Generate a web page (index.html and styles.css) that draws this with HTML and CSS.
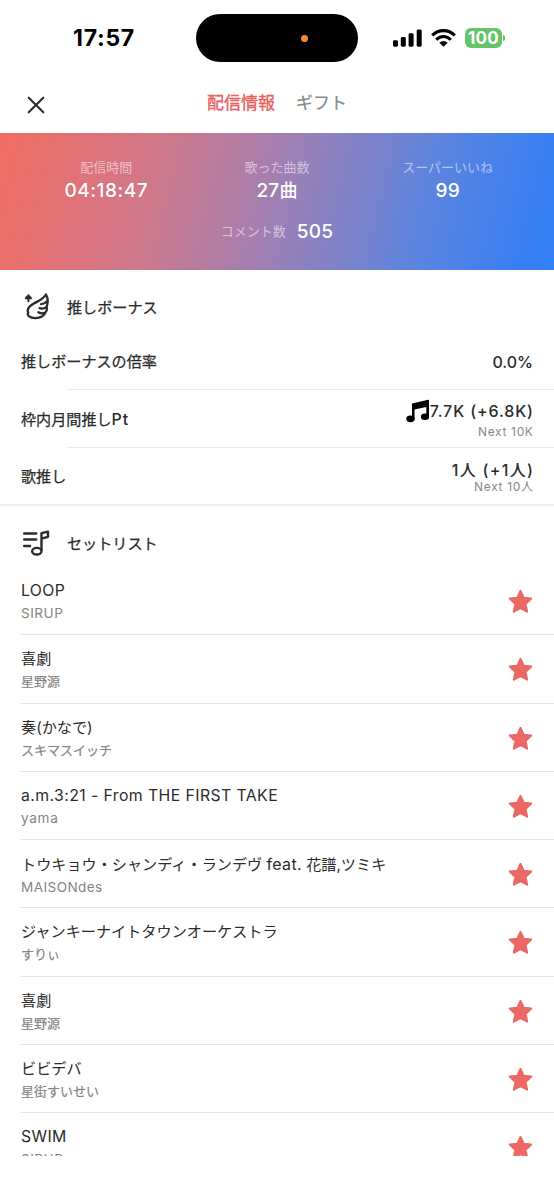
FILE: index.html
```
<!DOCTYPE html>
<html lang="ja">
<head>
<meta charset="utf-8">
<title>配信情報</title>
<link rel="stylesheet" href="styles.css">
</head>
<body>
<svg class="defs" width="0" height="0" aria-hidden="true">
  <symbol id="star" viewBox="0 0 24 24"><path d="M12 1.8 L15 8.4 L22.3 9.1 L16.8 14.3 L18.4 21.8 L12 18.3 L5.6 21.8 L7.2 14.3 L1.7 9.1 L9 8.4 Z" fill="#ec6864" stroke="#ec6864" stroke-width="2" stroke-linejoin="round"/></symbol>
</svg>
<div class="screen">
  <header class="status">
    <div class="clock">17:57</div>
    <div class="island"><i class="dot"></i></div>
    <div class="signals">
      <svg class="cell" width="29" height="18" viewBox="0 0 29 18"><rect x="0" y="11.3" width="5" height="6.4" rx="1.4"/><rect x="7.8" y="8" width="5" height="9.7" rx="1.4"/><rect x="15.6" y="4.3" width="5" height="13.4" rx="1.4"/><rect x="23.7" y="0.4" width="5" height="17.3" rx="1.4"/></svg>
      <svg class="wifi" width="25" height="18" viewBox="0 0 25 18"><g fill="none" stroke="#000" stroke-width="3.1"><path d="M1.2 6.4 Q6 1.6 12.5 1.6 T23.8 6.4"/><path d="M5.2 10.8 Q8.3 7.5 12.5 7.5 T19.8 10.8"/></g><path d="M8.3 13.8 Q12.5 10.4 16.7 13.8 L12.5 17.8 Z"/></svg>
      <div class="battery">100</div><i class="tip"></i>
    </div>
  </header>
  <nav class="tabs">
    <svg class="close" width="18" height="18" viewBox="0 0 18 18"><path d="M1.7 1.7 L16.3 16.3 M16.3 1.7 L1.7 16.3" stroke="#2d2d32" stroke-width="2.1" stroke-linecap="round"/></svg>
    <span class="tab active">配信情報</span><span class="tab">ギフト</span>
  </nav>
  <section class="summary">
    <div class="stats">
      <div class="stat"><span class="label">配信時間</span><b class="value time">04:18:47</b></div>
      <div class="stat"><span class="label">歌った曲数</span><b class="value">27<span class="unit">曲</span></b></div>
      <div class="stat"><span class="label">スーパーいいね</span><b class="value">99</b></div>
    </div>
    <div class="comments"><span class="label">コメント数</span><b class="value">505</b></div>
  </section>
  <section class="bonus">
    <h2 class="heading"><svg width="30" height="30" viewBox="0 0 30 30" fill="none" stroke="#2b2b2b" stroke-width="2.3" stroke-linecap="round" stroke-linejoin="round"><path d="M7.4 8.2 V4.5 M4.8 5.2 L7.4 2.3 L10 5.2 Z" stroke-width="2"/><path d="M25 1.5 C22 6.5 17.5 7.8 12.5 10.7 C7.6 13.5 5.6 16.5 7.3 19.7 C5.5 22.4 9 25.1 14.2 25.1 C19.5 25.1 23.6 22.6 24.4 19.5 C21.8 20.6 19 20.3 17.4 19.2 M24.4 19.5 C25.8 17.8 26.2 15.6 25.6 13.8 C23.5 15.5 20.8 15.9 18.6 15.2 M25.6 13.8 C27 10.2 27 5.2 25 1.5 M25.7 8.5 C24.3 10.2 22.2 11.1 20.1 11.2"/></svg><span>推しボーナス</span></h2>
    <div class="bonus-row rate"><span>推しボーナスの倍率</span><div class="amount"><span>0.0%</span></div></div>
    <div class="bonus-row"><span>枠内月間推し<span class="pt">Pt</span></span><div class="amount"><span class="points"><svg class="note" width="24" height="24" viewBox="0 0 24 24"><path d="M6 4.5 L22.3 0.7 Q23 .6 23 1.5 V18 H20.3 V8.1 L8.5 10.4 V20 H6 Z"/><ellipse cx="4.5" cy="19.8" rx="4.2" ry="3.4"/><ellipse cx="19" cy="17.8" rx="4.1" ry="3.3"/></svg>7.7K (+6.8K)</span><small>Next 10K</small></div></div>
    <div class="bonus-row"><span>歌推し</span><div class="amount people"><span>1人 (+1人)</span><small>Next 10人</small></div></div>
  </section>
  <section class="setlist">
    <h2 class="heading"><svg width="30" height="30" viewBox="0 0 30 30" fill="none" stroke="#2b2b2b" stroke-width="2.4" stroke-linecap="round" stroke-linejoin="round"><path d="M3.2 4.5 H15.2 M3.2 10.5 H15.2 M3.2 17 H9"/><path d="M20.5 21 V4.2 L27 2.6 V7.8 L20.5 9.7"/><ellipse cx="15.8" cy="22.2" rx="4.7" ry="3.3"/></svg><span>セットリスト</span></h2>
    <ul>
      <li><div><p class="latin">LOOP</p><small class="latin-sub">SIRUP</small></div><svg class="star"><use href="#star"/></svg></li>
      <li><div><p>喜劇</p><small>星野源</small></div><svg class="star"><use href="#star"/></svg></li>
      <li><div><p>奏(かなで)</p><small>スキマスイッチ</small></div><svg class="star"><use href="#star"/></svg></li>
      <li><div><p class="latin title">a.m.3:21 - From THE FIRST TAKE</p><small class="latin-sub yama">yama</small></div><svg class="star"><use href="#star"/></svg></li>
      <li><div><p>トウキョウ・シャンディ・ランデヴ <span class="feat">feat.</span> 花譜,ツミキ</p><small class="latin-sub maison">MAISONdes</small></div><svg class="star"><use href="#star"/></svg></li>
      <li><div><p>ジャンキーナイトタウンオーケストラ</p><small>すりぃ</small></div><svg class="star"><use href="#star"/></svg></li>
      <li><div><p>喜劇</p><small>星野源</small></div><svg class="star"><use href="#star"/></svg></li>
      <li><div><p>ビビデバ</p><small>星街すいせい</small></div><svg class="star"><use href="#star"/></svg></li>
      <li><div><p class="latin">SWIM</p><small class="latin-sub">SIRUP</small></div><svg class="star"><use href="#star"/></svg></li>
    </ul>
  </section>
</div>
</body>
</html>
```
FILE: styles.css
```
* { box-sizing: border-box; }
body { margin: 0; background: #fff; color: #2b2b2b; font: 15px/20px Inter, "Noto Sans CJK JP", sans-serif; }
.defs { display: block; }
.screen { width: 554px; height: 1156px; overflow: hidden; display: flex; flex-direction: column; }
.status { height: 76px; flex: none; display: grid; grid-template-columns: 196px 162px 196px; align-items: center; }
.clock { color: #000; padding-left: 12px; text-align: center; font-size: 23px; font-weight: 700; line-height: 28px; letter-spacing: .7px; }
.island { height: 48px; border-radius: 24px; background: #000; display: flex; align-items: center; padding-left: 105px; }
.dot { width: 7px; height: 7px; border-radius: 50%; background: #f28b38; }
.signals { display: flex; align-items: center; padding-left: 35px; }
.wifi { margin-left: 9px; }
.battery { width: 37px; height: 20px; margin-left: 9px; border-radius: 6px; background: #65c466; color: #fff; font-size: 17px; font-weight: 700; line-height: 20px; text-align: center; letter-spacing: .3px; }
.tip { width: 2px; height: 6px; margin-left: 1px; background: #65c466; border-radius: 0 2px 2px 0; }
.tabs { height: 57px; flex: none; display: flex; align-items: center; padding: 0 0 3px 27px; color: #858585; font-size: 17px; }
.close { margin: 3px 162px 0 0; }
.tab { -webkit-text-stroke: .2px; margin-right: 21px; }
.tab.active { color: #e9605d; -webkit-text-stroke: .35px; }
.summary { height: 137px; flex: none; padding-top: 24px; background: linear-gradient(104deg, #f26d63 0%, #d0788a 28%, #9d80b5 51%, #5b84df 76%, #387ff4 94%, #347ff7 100%); color: #fff; }
.stats { display: grid; grid-template-columns: 1fr 1fr 1fr; padding: 0 21px; }
.stat { display: flex; flex-direction: column; align-items: center; }
.label { font-size: 13px; line-height: 20px; color: rgba(255,255,255,.55); }
.value { font-size: 19px; font-weight: 500; line-height: 27px; letter-spacing: .2px; }
.unit { font-size: 18px; }
.time { letter-spacing: .55px; }
.comments { display: flex; justify-content: center; align-items: center; gap: 11px; margin-top: 14px; }
.comments .label { margin-top: -2px; }
.heading { margin: 0; display: flex; align-items: center; gap: 16px; padding-left: 21px; font-size: 15.1px; font-weight: 400; -webkit-text-stroke: .25px; }
.heading svg { flex: none; }
.bonus { height: 236px; flex: none; border-bottom: 2px solid #eee; }
.bonus .heading { height: 62px; padding-top: 14px; }
.bonus-row { height: 58px; display: flex; align-items: center; justify-content: space-between; padding: 2px 21px 0; font-size: 15.1px; -webkit-text-stroke: .25px; background: linear-gradient(#e9e9e9, #e9e9e9) 67px 0 / 100% 1px no-repeat; }
.bonus-row.rate { height: 57px; background: none; }
.pt { font-size: 16px; letter-spacing: .9px; font-weight: 500; -webkit-text-stroke: 0; }
.amount { display: flex; flex-direction: column; align-items: flex-end; font-size: 16px; line-height: 20px; -webkit-text-stroke: 0; font-weight: 500; }
.rate .amount { padding-top: 0; }
.amount small { font-size: 12px; line-height: 17px; letter-spacing: .65px; margin-right: -.6px; color: #888; font-weight: 400; }
.points { display: flex; align-items: center; letter-spacing: .87px; margin-right: -.8px; }
.people > span { letter-spacing: 1.3px; margin-right: -1.2px; }
.people small { line-height: 14px; }
.setlist .heading { height: 61px; padding-top: 14px; }
ul { list-style: none; margin: 0; padding: 0 0 0 21px; }
li { height: 68.25px; display: flex; justify-content: space-between; align-items: flex-start; padding: 13px 21px 0 0; border-bottom: 1px solid #e4e4e4; }
p { margin: 0; font-size: 15.15px; line-height: 22px; white-space: nowrap; }
li small { display: block; font-size: 13px; line-height: 23px; color: #858585; -webkit-text-stroke: .2px; }
.latin { font-size: 15.8px; letter-spacing: .35px; }
.title { letter-spacing: .42px; }
.feat { font-size: 16px; letter-spacing: .35px; }
li .latin-sub { font-size: 13.6px; letter-spacing: .5px; -webkit-text-stroke: 0; }
li .maison { letter-spacing: .4px; }
li .yama { letter-spacing: .7px; }
.star { width: 25px; height: 25px; margin-top: 9px; flex: none; }
```
